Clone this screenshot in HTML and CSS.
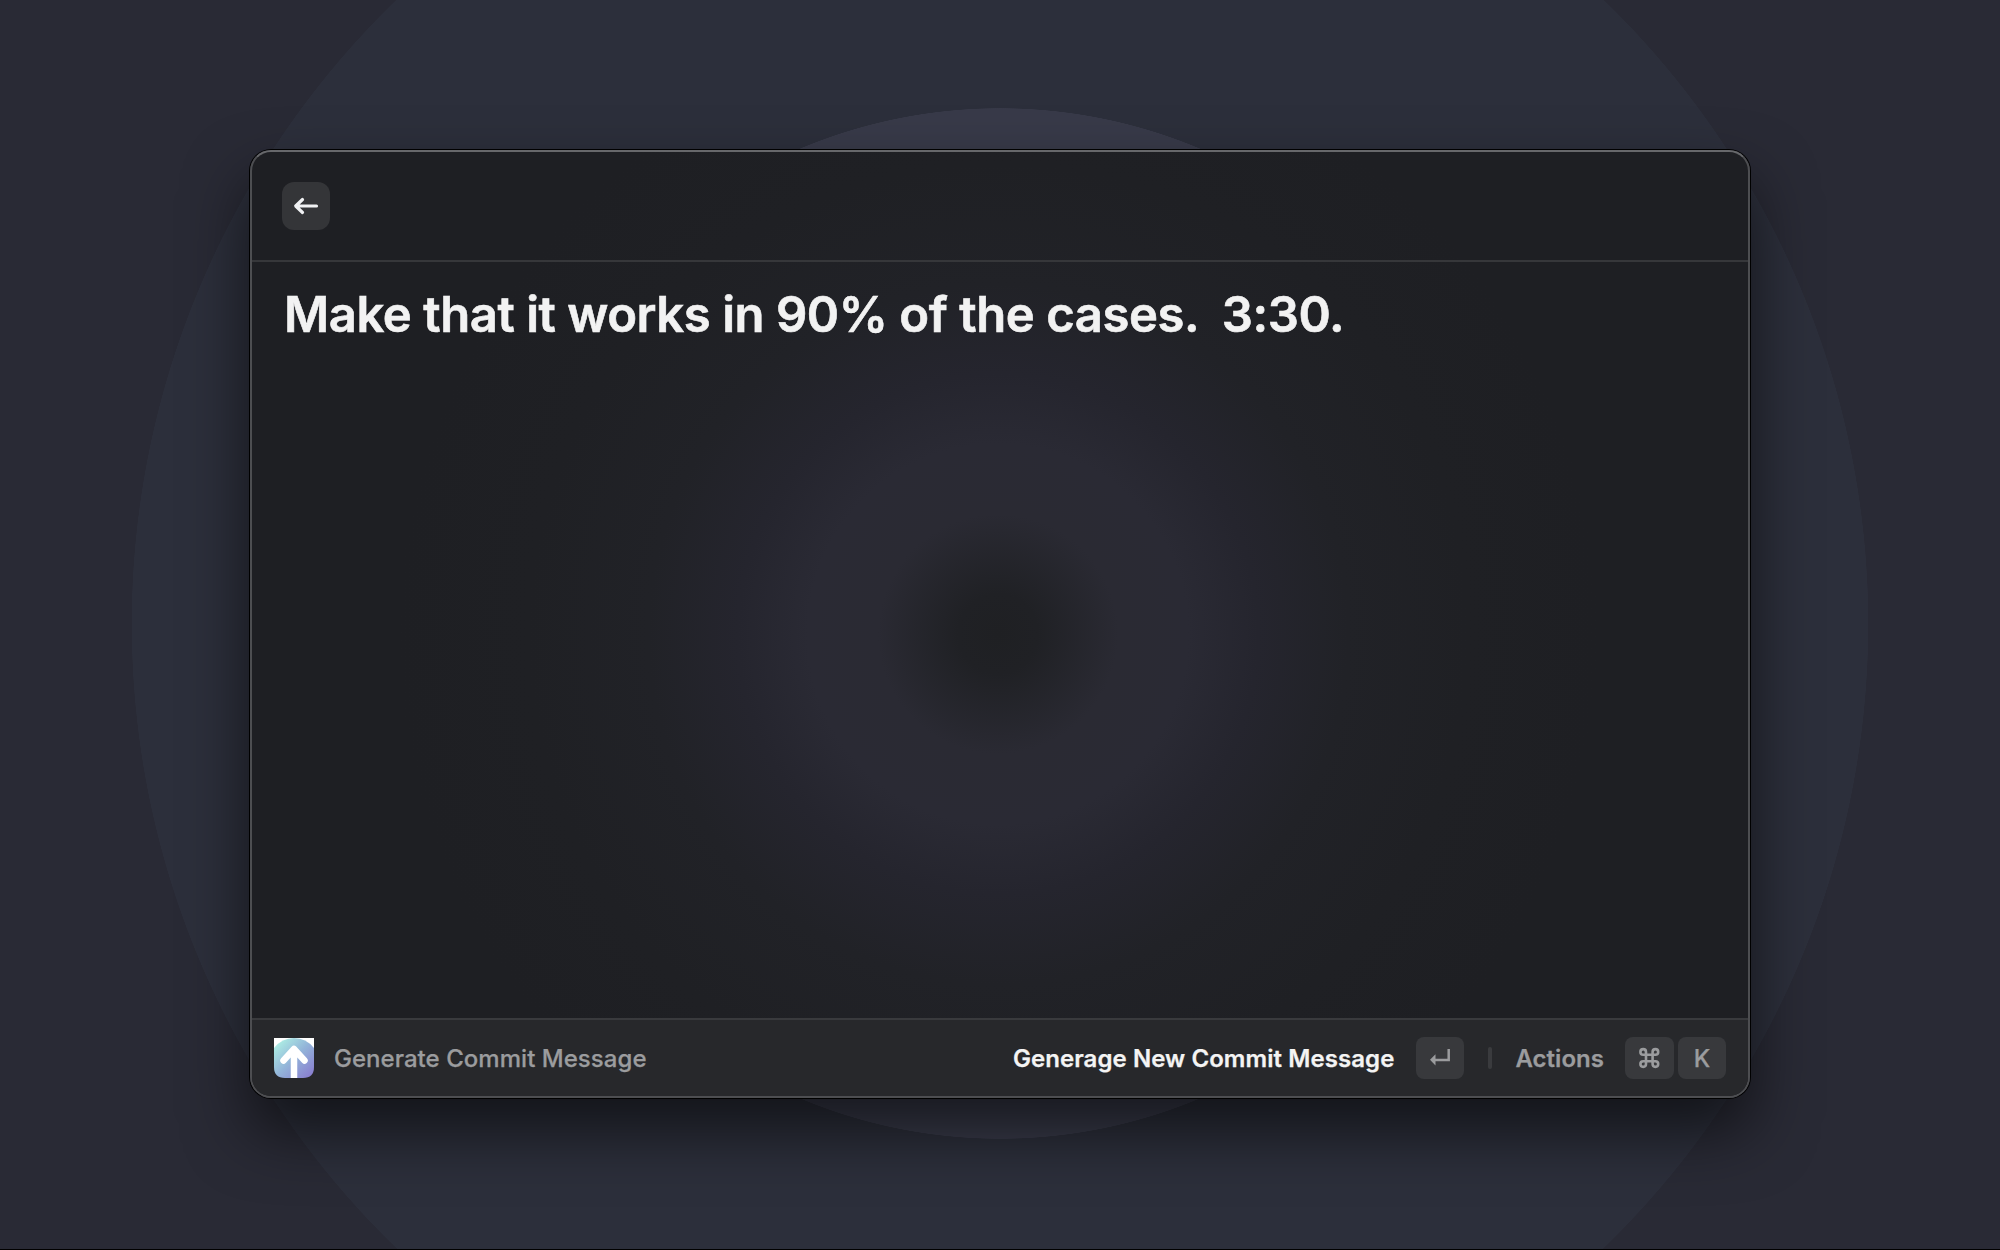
FILE: index.html
```html
<!DOCTYPE html>
<html lang="en">
<head>
<meta charset="utf-8">
<title>Generate Commit Message</title>
<link rel="stylesheet" href="styles.css">
</head>
<body>
<main class="stage">
  <section class="window">
    <header class="window-header">
      <button class="back" aria-label="Back">
        <svg width="48" height="48" viewBox="0 0 48 48" fill="none" stroke="currentColor" stroke-width="3.200" stroke-linecap="round" stroke-linejoin="round"><path d="M34.500 24H14M20.500 17.500 13.700 24l6.800 6.500"/></svg>
      </button>
    </header>
    <div class="content"><h1 class="message">Make that it works in 90% of the cases.  3:30.</h1></div>
    <footer class="window-footer">
      <svg class="app-icon" width="40" height="40" viewBox="0 0 40 40">
        <defs><linearGradient id="app-fill" x1="0" y1="0" x2="1" y2="1"><stop offset="0.08" stop-color="#aef0e4"/><stop offset="0.5" stop-color="#93b5d9"/><stop offset="1" stop-color="#8877cf"/></linearGradient></defs>
        <path d="M0 0H40V15H0Z" fill="#fff"/>
        <path d="M0 10Q8 0 20 0T40 10V29Q40 40 29 40H11Q0 40 0 29Z" fill="url(#app-fill)"/>
        <path d="M20 40V12M9.500 22.500 20 11 30.500 22.500" fill="none" stroke="#fff" stroke-width="6.500" stroke-linecap="round" stroke-linejoin="round"/>
      </svg>
      <span class="title">Generate Commit Message</span>
      <span class="primary">Generage New Commit Message</span>
      <kbd class="key"><svg width="48" height="42" viewBox="0 0 48 42"><path d="M32.700 12V23H19" fill="none" stroke="currentColor" stroke-width="2.500"/><path d="M14 22.800 19.500 17.200V28.400Z" fill="currentColor"/></svg></kbd>
      <span class="separator"></span>
      <span class="actions">Actions</span>
      <span class="shortcut">
        <kbd class="key key-command"><svg width="49" height="42" viewBox="0 0 49 42" fill="none" stroke="currentColor" stroke-width="2.600"><path d="M21 17.700H27.600V24.300H21ZM21 17.700H18.200A2.800 2.800 0 1 1 21 14.900ZM27.600 17.700V14.900A2.800 2.800 0 1 1 30.400 17.700ZM27.600 24.300H30.400A2.800 2.800 0 1 1 27.600 27.100ZM21 24.300V27.100A2.800 2.800 0 1 1 18.200 24.300Z"/></svg></kbd>
        <kbd class="key">K</kbd>
      </span>
    </footer>
  </section>
</main>
</body>
</html>
```
FILE: styles.css
```css
* { box-sizing: border-box; }
body { margin: 0; overflow: hidden; background: #000; font-family: Inter, "Liberation Sans", sans-serif; }
.stage {
  height: 1249px;
  padding: 150px 250px 0;
  background:
    radial-gradient(circle 515.5px at 1000px 623.5px, #383a49 0, #383a49 515px, transparent 515.5px),
    radial-gradient(circle 868.5px at 1000px 624px, #2c2f3b 0, #2c2f3b 868px, transparent 868.5px),
    #292a35;
}
.window {
  display: flex;
  flex-direction: column;
  height: 948px;
  border: 2px solid #4d4e51;
  border-top-color: #67686b;
  border-radius: 21px;
  overflow: hidden;
  background: radial-gradient(circle at 746px 482px, #1f2023 0, #202125 40px, #2a2a33 120px, #2a2a34 190px, #25252e 260px, #212227 350px, #1f2024 470px, #1e1f23 600px, #1e1f23 100%);
  box-shadow: 0 0 0 1px #000, 0 32px 64px rgba(0, 0, 0, .6);
}
.window-header { height: 110px; flex: none; padding: 30px; border-bottom: 2px solid #36373a; }
.back { display: block; width: 48px; height: 48px; padding: 0; border: 0; border-radius: 12px; background: #343538; color: #f0f1f3; }
.back svg { display: block; }
.content { flex: 1; padding: 23px 32px; }
.message { margin: 0; font-size: 49px; line-height: 60px; font-weight: 600; letter-spacing: -.45px; -webkit-text-stroke: .6px currentColor; color: #f2f2f2; white-space: pre; }
.window-footer {
  display: flex;
  align-items: center;
  height: 78px;
  flex: none;
  padding: 0 22px;
  border-top: 2px solid #393a3d;
  background: #27282b;
  color: #9b9c9e;
  font-size: 24px;
  font-weight: 500;
  letter-spacing: .04px;
  -webkit-text-stroke: .25px currentColor;
}
.app-icon { margin-right: 20px; }
.primary { margin-left: auto; margin-right: 22px; color: #f4f4f4; font-weight: 600; letter-spacing: .07px; }
.key { display: flex; justify-content: center; align-items: center; width: 48px; height: 42px; border-radius: 8px; background: #38393c; color: #9b9c9e; font: inherit; }
.key-command { width: 49px; }
.separator { width: 4px; height: 22px; margin: 0 23px 0 24px; border-radius: 2px; background: #3a3b3e; }
.actions { margin-right: 21px; font-weight: 600; }
.shortcut { display: flex; gap: 4px; }
```
